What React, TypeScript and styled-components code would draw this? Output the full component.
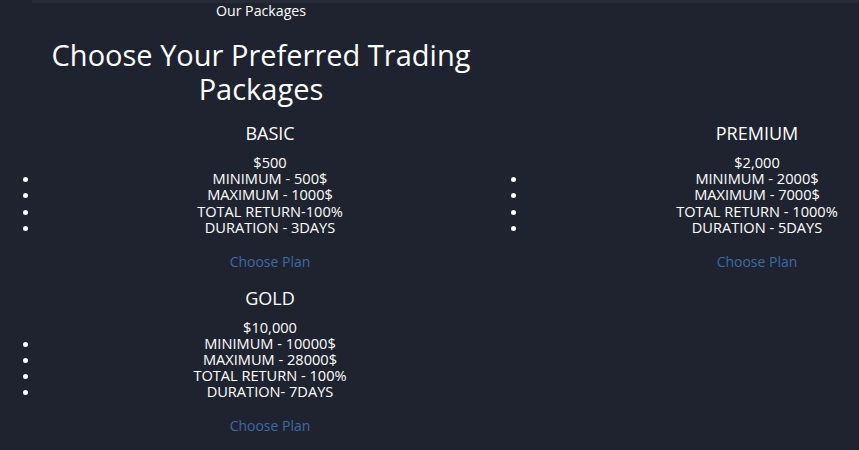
import * as React from "react";
import styled, { createGlobalStyle } from "styled-components";

const GlobalStyle = createGlobalStyle`
  html, body {
    margin: 0;
    padding: 0;
    background: #1f2330;
    overflow: hidden;
  }
  body {
    color: #ffffff;
    font-family: "Open Sans", "Liberation Sans", sans-serif;
  }
`;

const Page = styled.div`
  width: 859px;
  height: 450px;
  overflow: hidden;
`;

const TopStrip = styled.div`
  height: 3px;
  margin-left: 32px;
  background: #272b38;
`;

const Header = styled.header`
  width: 522px;
  text-align: center;
`;

const Eyebrow = styled.div`
  font-size: 14.2px;
  line-height: 15px;
`;

const Title = styled.h1`
  margin: 20px 0 0;
  font-size: 29px;
  line-height: 34px;
  font-weight: 400;
`;

const Grid = styled.div`
  display: grid;
  width: 1026px;
  grid-template-columns: 488px 52px 486px;
  margin-top: 15px;
`;

const Card = styled.section<{ $col: string; $row: number }>`
  grid-column: ${(p) => p.$col};
  grid-row: ${(p) => p.$row};
  text-align: center;
  padding-bottom: 14px;
`;

const Name = styled.h3`
  margin: 0 0 9px;
  font-size: 18px;
  line-height: 24px;
  font-weight: 400;
`;

const Price = styled.div`
  font-size: 14.6px;
  line-height: 16.2px;
`;

const Features = styled.ul`
  margin: 0;
  padding: 0 40px;
  list-style: disc;
`;

const Feature = styled.li`
  font-size: 14.6px;
  line-height: 16.2px;
  text-align: center;
`;

const PlanLink = styled.a`
  display: block;
  margin-top: 16.6px;
  font-size: 14px;
  line-height: 20px;
  color: #3b6ba3;
  text-decoration: none;
`;

type Pkg = {
  name: string;
  price: string;
  features: string[];
  col: string;
  row: number;
};

const packages: Pkg[] = [
  {
    name: "BASIC",
    price: "$500",
    features: ["MINIMUM - 500$", "MAXIMUM - 1000$", "TOTAL RETURN-100%", "DURATION - 3DAYS"],
    col: "1 / 3",
    row: 1,
  },
  {
    name: "PREMIUM",
    price: "$2,000",
    features: ["MINIMUM - 2000$", "MAXIMUM - 7000$", "TOTAL RETURN - 1000%", "DURATION - 5DAYS"],
    col: "2 / 4",
    row: 1,
  },
  {
    name: "GOLD",
    price: "$10,000",
    features: ["MINIMUM - 10000$", "MAXIMUM - 28000$", "TOTAL RETURN - 100%", "DURATION- 7DAYS"],
    col: "1 / 3",
    row: 2,
  },
];

export default function App() {
  return (
    <Page>
      <GlobalStyle />
      <TopStrip />
      <Header>
        <Eyebrow>Our Packages</Eyebrow>
        <Title>
          Choose Your Preferred Trading
          <br />
          Packages
        </Title>
      </Header>
      <Grid>
        {packages.map((p) => (
          <Card key={p.name} $col={p.col} $row={p.row}>
            <Name>{p.name}</Name>
            <Price>{p.price}</Price>
            <Features>
              {p.features.map((f) => (
                <Feature key={f}>{f}</Feature>
              ))}
            </Features>
            <PlanLink href="#">Choose Plan</PlanLink>
          </Card>
        ))}
      </Grid>
    </Page>
  );
}
